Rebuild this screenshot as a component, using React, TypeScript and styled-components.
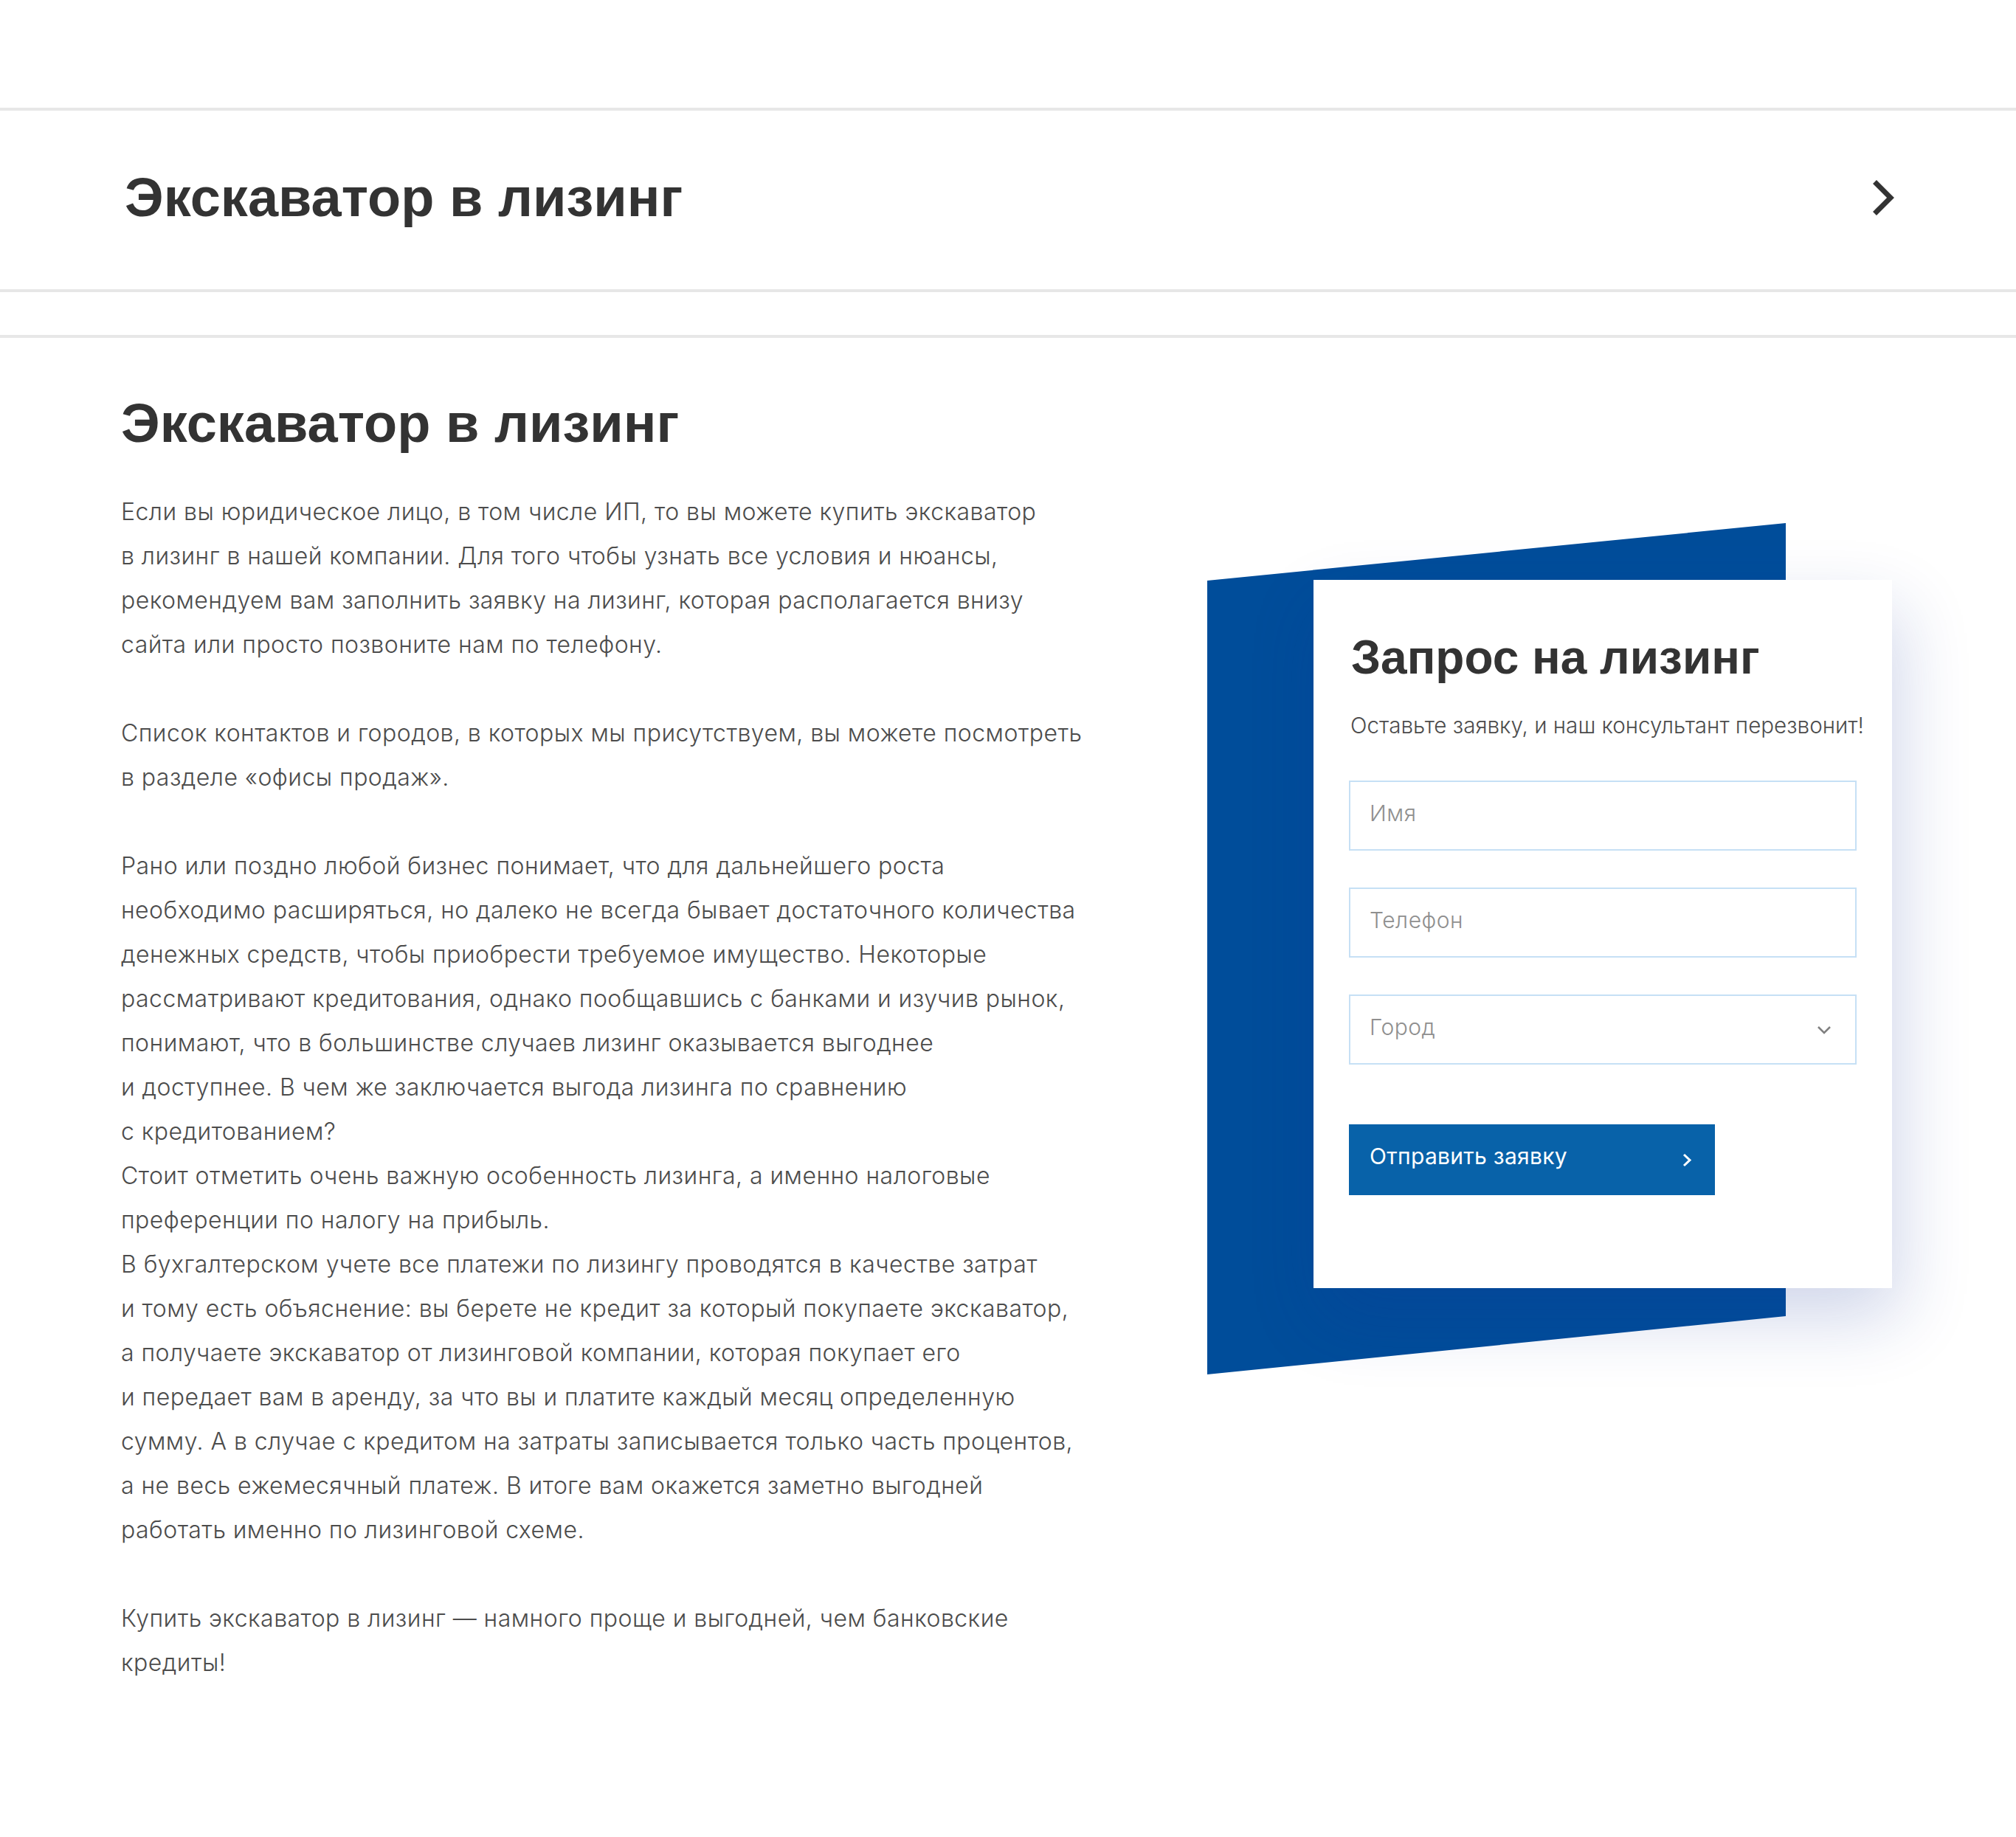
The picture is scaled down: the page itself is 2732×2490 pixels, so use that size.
import React from "react";
import styled, { createGlobalStyle } from "styled-components";

const GlobalStyle = createGlobalStyle`
    html, body {
        margin: 0;
        padding: 0;
        background: #ffffff;
    }
    body {
        font-family: "Liberation Sans", Arial, sans-serif;
        color: #333333;
    }
    * {
        box-sizing: border-box;
    }
`;

const LINE = "#e7e7e7";
const LIGHT_FONT = `Inter, "Liberation Sans", Arial, sans-serif`;

const Page = styled.div`
    width: 2732px;
    min-height: 2490px;
    padding-top: 146px;
`;

const AccordionHead = styled.div`
    display: flex;
    align-items: center;
    justify-content: space-between;
    height: 250px;
    border-top: 4px solid ${LINE};
    border-bottom: 4px solid ${LINE};
    padding: 0 164px 6px 169px;
    cursor: pointer;
`;

const HeadTitle = styled.h2`
    margin: 0;
    font-size: 74px;
    line-height: 1.2;
    font-weight: 700;
    color: #333333;
`;

const Content = styled.section`
    display: flex;
    align-items: flex-start;
    justify-content: space-between;
    margin-top: 58px;
    border-top: 4px solid ${LINE};
    padding: 72px 168px 0 164px;
`;

const TextColumn = styled.div`
    width: 1340px;
`;

const Title = styled.h1`
    margin: 0 0 45px;
    font-size: 74px;
    line-height: 1.2;
    font-weight: 700;
    color: #333333;
`;

const Paragraph = styled.p`
    margin: 0 0 60px;
    font-family: ${LIGHT_FONT};
    font-size: 32px;
    font-weight: 300;
    letter-spacing: 0.45px;
    line-height: 60px;
    color: #4c4c4c;
    white-space: pre-line;
`;

const FormArea = styled.div`
    position: relative;
    width: 928px;
    flex-shrink: 0;
`;

const Backdrop = styled.div`
    position: absolute;
    left: 0;
    top: 179px;
    width: 784px;
    height: 1154px;
    background: #004d9a;
    clip-path: polygon(0 78px, 100% 0, 100% 1075px, 0 100%);
`;

const Card = styled.form`
    position: relative;
    margin: 256px 0 0 144px;
    width: 784px;
    height: 960px;
    padding: 68px 48px 0;
    background: #ffffff;
    box-shadow: 10px 40px 90px rgba(20, 50, 150, 0.2);
`;

const FormTitle = styled.h3`
    margin: 0 0 0 3px;
    font-size: 64px;
    line-height: 74px;
    font-weight: 700;
    color: #333333;
`;

const FormNote = styled.p`
    margin: 35px 0 0 2px;
    font-family: ${LIGHT_FONT};
    font-size: 29.6px;
    font-weight: 300;
    line-height: 40px;
    color: #4c4c4c;
    white-space: nowrap;
`;

const Fields = styled.div`
    display: flex;
    flex-direction: column;
    gap: 50px;
    margin-top: 55px;
`;

const Input = styled.input`
    display: block;
    width: 100%;
    height: 95px;
    border: 2px solid #c6e0f5;
    border-radius: 0;
    padding: 0 26px 7px;
    font-family: ${LIGHT_FONT};
    font-size: 30px;
    font-weight: 300;
    letter-spacing: 0.5px;
    color: #333333;
    background: #ffffff;
    outline: none;
    &::placeholder {
        color: #8f8f8f;
    }
`;

const Select = styled.div`
    display: flex;
    align-items: center;
    justify-content: space-between;
    height: 95px;
    border: 2px solid #c6e0f5;
    padding: 0 32px 0 26px;
    font-family: ${LIGHT_FONT};
    font-size: 30px;
    font-weight: 300;
    letter-spacing: 0.5px;
    color: #8f8f8f;
    cursor: pointer;
`;

const Label = styled.span<{ lift: number }>`
    padding-bottom: ${({ lift }) => lift}px;
`;

const SubmitButton = styled.button`
    display: flex;
    align-items: center;
    justify-content: space-between;
    margin-top: 81px;
    width: 496px;
    height: 96px;
    border: none;
    padding: 0 31px 0 28px;
    background: #0862a9;
    color: #ffffff;
    font-family: ${LIGHT_FONT};
    font-size: 30px;
    font-weight: 400;
    letter-spacing: 0.3px;
    cursor: pointer;
`;

const paragraphs = [
    `Если вы юридическое лицо, в том числе ИП, то вы можете купить экскаватор
в лизинг в нашей компании. Для того чтобы узнать все условия и нюансы,
рекомендуем вам заполнить заявку на лизинг, которая располагается внизу
сайта или просто позвоните нам по телефону.`,
    `Список контактов и городов, в которых мы присутствуем, вы можете посмотреть
в разделе «офисы продаж».`,
    `Рано или поздно любой бизнес понимает, что для дальнейшего роста
необходимо расширяться, но далеко не всегда бывает достаточного количества
денежных средств, чтобы приобрести требуемое имущество. Некоторые
рассматривают кредитования, однако пообщавшись с банками и изучив рынок,
понимают, что в большинстве случаев лизинг оказывается выгоднее
и доступнее. В чем же заключается выгода лизинга по сравнению
с кредитованием?
Стоит отметить очень важную особенность лизинга, а именно налоговые
преференции по налогу на прибыль.
В бухгалтерском учете все платежи по лизингу проводятся в качестве затрат
и тому есть объяснение: вы берете не кредит за который покупаете экскаватор,
а получаете экскаватор от лизинговой компании, которая покупает его
и передает вам в аренду, за что вы и платите каждый месяц определенную
сумму. А в случае с кредитом на затраты записывается только часть процентов,
а не весь ежемесячный платеж. В итоге вам окажется заметно выгодней
работать именно по лизинговой схеме.`,
    `Купить экскаватор в лизинг — намного проще и выгодней, чем банковские
кредиты!`,
];

const BigChevron = () => (
    <svg width="32" height="52" viewBox="0 0 32 52" fill="none">
        <polyline
            points="4.5,4.5 26,26 4.5,47.5"
            stroke="#333333"
            strokeWidth="7"
            strokeLinejoin="miter"
        />
    </svg>
);

const DownChevron = () => (
    <svg width="20" height="12" viewBox="0 0 20 12" fill="none">
        <polyline points="2,2 10,10 18,2" stroke="#808080" strokeWidth="2.5" />
    </svg>
);

const RightChevron = () => (
    <svg width="13" height="19" viewBox="0 0 13 19" fill="none">
        <polyline points="2,2 10,9.5 2,17" stroke="#ffffff" strokeWidth="3" />
    </svg>
);

export default function App() {
    return (
        <Page>
            <GlobalStyle />
            <AccordionHead>
                <HeadTitle>Экскаватор в лизинг</HeadTitle>
                <BigChevron />
            </AccordionHead>
            <Content>
                <TextColumn>
                    <Title>Экскаватор в лизинг</Title>
                    {paragraphs.map((text, i) => (
                        <Paragraph key={i}>{text}</Paragraph>
                    ))}
                </TextColumn>
                <FormArea>
                    <Backdrop />
                    <Card onSubmit={(e) => e.preventDefault()}>
                        <FormTitle>Запрос на лизинг</FormTitle>
                        <FormNote>Оставьте заявку, и наш консультант перезвонит!</FormNote>
                        <Fields>
                            <Input type="text" placeholder="Имя" />
                            <Input type="tel" placeholder="Телефон" />
                            <Select>
                                <Label lift={7}>Город</Label>
                                <DownChevron />
                            </Select>
                        </Fields>
                        <SubmitButton type="submit">
                            <Label lift={10}>Отправить заявку</Label>
                            <RightChevron />
                        </SubmitButton>
                    </Card>
                </FormArea>
            </Content>
        </Page>
    );
}
